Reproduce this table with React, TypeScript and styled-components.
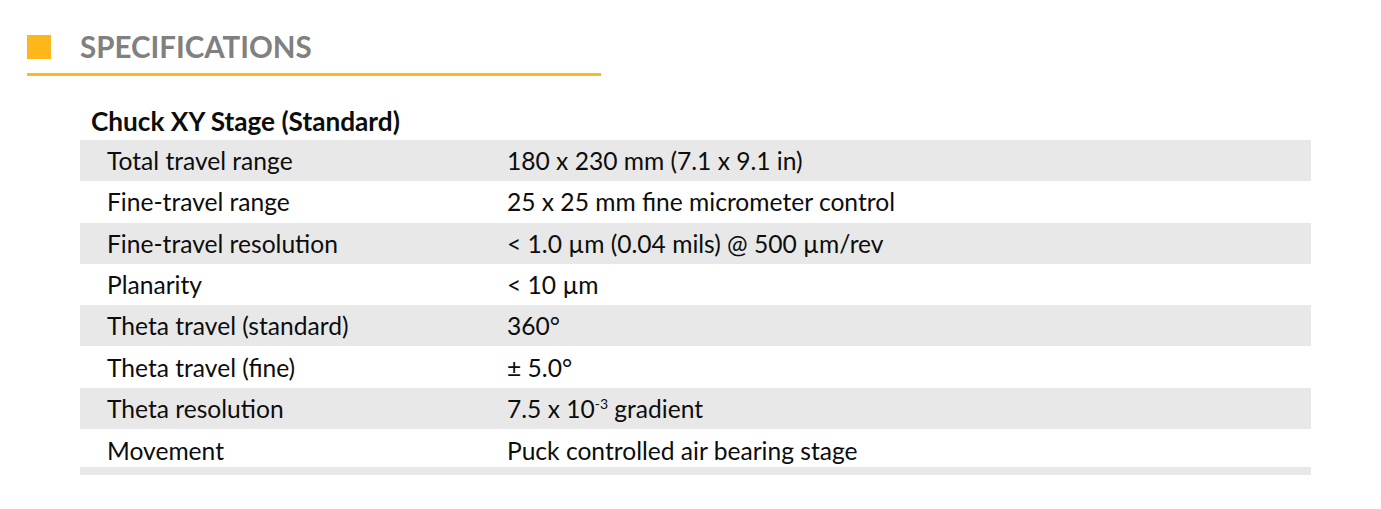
import * as React from "react";
import styled, { createGlobalStyle } from "styled-components";

const GlobalStyle = createGlobalStyle`
  html, body {
    margin: 0;
    padding: 0;
    background: #ffffff;
  }
  body {
    font-family: "Lato", "Liberation Sans", sans-serif;
    color: #111111;
  }
`;

const Page = styled.div`
  width: 1381px;
  height: 509px;
  padding: 35px 0 0 27px;
  box-sizing: border-box;
`;

const HeaderBar = styled.div`
  width: 574px;
  display: flex;
  align-items: flex-start;
  gap: 29px;
  height: 38px;
  border-bottom: 3px solid #fbb923;
`;

const Square = styled.span`
  width: 24px;
  height: 24px;
  background: #fdb71b;
  flex: none;
`;

const HeaderTitle = styled.h2`
  margin: -3px 0 0;
  font-size: 29.5px;
  line-height: 30px;
  font-weight: 700;
  color: #808080;
`;

const Section = styled.section`
  margin: 26px 0 0 53px;
  width: 1231px;
`;

const GroupTitle = styled.h3`
  margin: 0 0 0 11px;
  font-size: 26.2px;
  line-height: 38px;
  font-weight: 700;
  color: #0d0d0d;
`;

const Table = styled.div`
  display: flex;
  flex-direction: column;
  border-bottom: 8px solid #e8e8e8;
`;

const Row = styled.div<{ $shaded: boolean; $short?: boolean }>`
  display: grid;
  grid-template-columns: 427px 1fr;
  height: ${(p) => (p.$short ? "38px" : "41.3px")};
  padding-top: ${(p) => (p.$short ? "4px" : "0")};
  box-sizing: border-box;
  align-items: center;
  background: ${(p) => (p.$shaded ? "#e8e8e8" : "#ffffff")};
  font-size: 24.6px;
  color: #0d0d0d;
`;

const Label = styled.span`
  padding-left: 27px;
`;

const Value = styled.span``;

const Sup = styled.sup`
  font-size: 14px;
  vertical-align: 9px;
  line-height: 0;
`;

const rows: Array<[string, React.ReactNode]> = [
  ["Total travel range", "180 x 230 mm (7.1 x 9.1 in)"],
  ["Fine-travel range", "25 x 25 mm fine micrometer control"],
  ["Fine-travel resolution", "< 1.0 µm (0.04 mils) @ 500 µm/rev"],
  ["Planarity", "< 10 µm"],
  ["Theta travel (standard)", "360°"],
  ["Theta travel (fine)", "± 5.0°"],
  [
    "Theta resolution",
    <>
      7.5 x 10<Sup>-3</Sup> gradient
    </>,
  ],
  ["Movement", "Puck controlled air bearing stage"],
];

export default function App() {
  return (
    <Page>
      <GlobalStyle />
      <HeaderBar>
        <Square />
        <HeaderTitle>SPECIFICATIONS</HeaderTitle>
      </HeaderBar>
      <Section>
        <GroupTitle>Chuck XY Stage (Standard)</GroupTitle>
        <Table>
          {rows.map(([label, value], i) => (
            <Row key={i} $shaded={i % 2 === 0} $short={i === rows.length - 1}>
              <Label>{label}</Label>
              <Value>{value}</Value>
            </Row>
          ))}
        </Table>
      </Section>
    </Page>
  );
}
